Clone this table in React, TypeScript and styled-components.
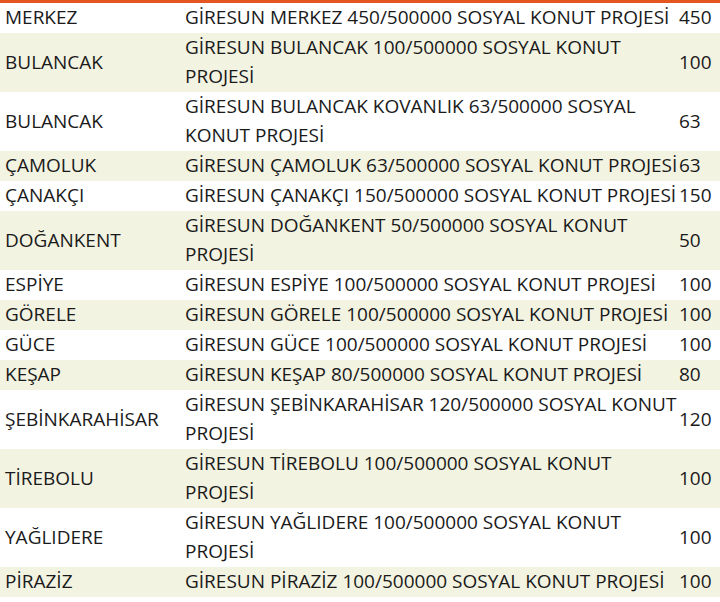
import styled, { createGlobalStyle } from 'styled-components';

const GlobalStyle = createGlobalStyle`
  html, body {
    margin: 0;
    padding: 0;
    background: #ffffff;
  }
  body {
    font-family: "Open Sans", "Noto Sans", sans-serif;
    color: #1a1a1a;
  }
`;

const Wrapper = styled.div`
  width: 720px;
  border-top: 3px solid #e4561f;
`;

const Row = styled.div<{ $shaded: boolean }>`
  display: grid;
  grid-template-columns: 180px 498px 42px;
  align-items: center;
  background-color: ${({ $shaded }) => ($shaded ? '#f3f3e2' : '#ffffff')};
  border-bottom: 1px solid ${({ $shaded }) => ($shaded ? '#f3f3e2' : '#ffffff')};
  font-size: 19px;
  line-height: 29px;
`;

const District = styled.div`
  padding-left: 5px;
  white-space: nowrap;
`;

const Project = styled.div`
  padding-left: 5px;
  white-space: nowrap;
`;

const Count = styled.div`
  padding-left: 1px;
  white-space: nowrap;
`;

type Item = { district: string; project: string[]; count: string };

const items: Item[] = [
  { district: 'MERKEZ', project: ['GİRESUN MERKEZ 450/500000 SOSYAL KONUT PROJESİ'], count: '450' },
  { district: 'BULANCAK', project: ['GİRESUN BULANCAK 100/500000 SOSYAL KONUT', 'PROJESİ'], count: '100' },
  { district: 'BULANCAK', project: ['GİRESUN BULANCAK KOVANLIK 63/500000 SOSYAL', 'KONUT PROJESİ'], count: '63' },
  { district: 'ÇAMOLUK', project: ['GİRESUN ÇAMOLUK 63/500000 SOSYAL KONUT PROJESİ'], count: '63' },
  { district: 'ÇANAKÇI', project: ['GİRESUN ÇANAKÇI 150/500000 SOSYAL KONUT PROJESİ'], count: '150' },
  { district: 'DOĞANKENT', project: ['GİRESUN DOĞANKENT 50/500000 SOSYAL KONUT', 'PROJESİ'], count: '50' },
  { district: 'ESPİYE', project: ['GİRESUN ESPİYE 100/500000 SOSYAL KONUT PROJESİ'], count: '100' },
  { district: 'GÖRELE', project: ['GİRESUN GÖRELE 100/500000 SOSYAL KONUT PROJESİ'], count: '100' },
  { district: 'GÜCE', project: ['GİRESUN GÜCE 100/500000 SOSYAL KONUT PROJESİ'], count: '100' },
  { district: 'KEŞAP', project: ['GİRESUN KEŞAP 80/500000 SOSYAL KONUT PROJESİ'], count: '80' },
  { district: 'ŞEBİNKARAHİSAR', project: ['GİRESUN ŞEBİNKARAHİSAR 120/500000 SOSYAL KONUT', 'PROJESİ'], count: '120' },
  { district: 'TİREBOLU', project: ['GİRESUN TİREBOLU 100/500000 SOSYAL KONUT', 'PROJESİ'], count: '100' },
  { district: 'YAĞLIDERE', project: ['GİRESUN YAĞLIDERE 100/500000 SOSYAL KONUT', 'PROJESİ'], count: '100' },
  { district: 'PİRAZİZ', project: ['GİRESUN PİRAZİZ 100/500000 SOSYAL KONUT PROJESİ'], count: '100' },
];

export default function App() {
  return (
    <>
      <GlobalStyle />
      <Wrapper>
        {items.map((item, i) => (
          <Row key={i} $shaded={i % 2 === 1}>
            <District>{item.district}</District>
            <Project>
              {item.project.map((line, j) => (
                <div key={j}>{line}</div>
              ))}
            </Project>
            <Count>{item.count}</Count>
          </Row>
        ))}
      </Wrapper>
    </>
  );
}
